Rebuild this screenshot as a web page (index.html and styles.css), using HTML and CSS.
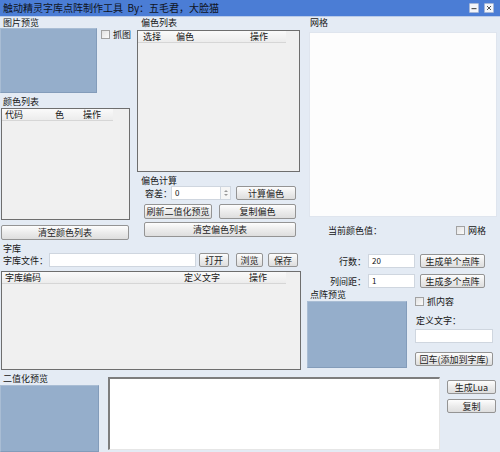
FILE: index.html
```html
<!DOCTYPE html>
<html>
<head>
<meta charset="utf-8">
<link rel="stylesheet" href="styles.css">
</head>
<body>
<div class="titlebar">
  <span class="title">触动精灵字库点阵制作工具&nbsp; By：五毛君，大脸猫</span>
  <div class="tb-btns">
    <span class="tb-btn"><svg width="8" height="8" viewBox="0 0 8 8"><rect x="1.5" y="4" width="5" height="1.2" fill="#555"/></svg></span>
    <span class="tb-btn"><svg width="8" height="8" viewBox="0 0 8 8"><path d="M2 2L6 6M6 2L2 6" stroke="#555" stroke-width="1"/></svg></span>
  </div>
</div>

<div class="top">
  <div class="col-left">
    <div class="lbl lbl-pic">图片预览</div>
    <div class="pic-row">
      <div class="preview pv-pic"></div>
      <div class="chk chk-grab"><span class="box"></span>抓图</div>
    </div>
    <div class="lbl lbl-colors">颜色列表</div>
    <div class="list list-colors">
      <div class="lhead lh-colors"><span>代码</span><span>色</span><span>操作</span></div>
    </div>
    <div class="btn btn-clear-colors">清空颜色列表</div>
  </div>

  <div class="col-mid">
    <div class="lbl lbl-off">偏色列表</div>
    <div class="list list-off">
      <div class="lhead lh-off"><span>选择</span><span>偏色</span><span>操作</span></div>
    </div>
    <div class="lbl lbl-calc">偏色计算</div>
    <div class="calc-row">
      <span class="tol-lbl">容差：</span>
      <span class="input in-tol">0</span>
      <span class="spin"><svg width="8" height="12" viewBox="0 0 8 12"><path d="M2 5L4 3L6 5Z" fill="#999"/><path d="M2 7L4 9L6 7Z" fill="#999"/></svg></span>
      <span class="btn b-calc">计算偏色</span>
    </div>
    <div class="calc-row2">
      <span class="btn b-refresh">刷新二值化预览</span>
      <span class="btn b-copyoff">复制偏色</span>
    </div>
    <div class="btn b-clearoff">清空偏色列表</div>
  </div>

  <div class="col-right">
    <div class="lbl lbl-grid">网格</div>
    <div class="grid-box"></div>
    <div class="grid-row">
      <span class="cur-lbl">当前颜色值：</span>
      <span class="chk chk-grid"><span class="box"></span>网格</span>
    </div>
  </div>
</div>

<div class="mid">
  <div class="lib">
    <div class="lbl lbl-lib">字库</div>
    <div class="lib-row">
      <span class="lib-lbl">字库文件：</span>
      <span class="input in-file"></span>
      <span class="btn b-open">打开</span>
      <span class="btn b-browse">浏览</span>
      <span class="btn b-save">保存</span>
    </div>
    <div class="list list-lib">
      <div class="lhead lh-lib"><span>字库编码</span><span>定义文字</span><span>操作</span></div>
    </div>
  </div>

  <div class="dot">
    <div class="form-row">
      <span class="flbl">行数：</span>
      <span class="input in-num">20</span>
      <span class="btn b-gen">生成单个点阵</span>
    </div>
    <div class="form-row r2">
      <span class="flbl">列间距：</span>
      <span class="input in-num">1</span>
      <span class="btn b-gen">生成多个点阵</span>
    </div>
    <div class="dot-body">
      <div class="dot-prev">
        <div class="lbl lbl-dot">点阵预览</div>
        <div class="preview pv-dot"></div>
      </div>
      <div class="dot-side">
        <div class="chk chk-content"><span class="box"></span>抓内容</div>
        <div class="def-lbl">定义文字：</div>
        <div class="input in-def"></div>
        <div class="btn b-add">回车(添加到字库)</div>
      </div>
    </div>
  </div>
</div>

<div class="bottom">
  <div class="bin">
    <div class="lbl lbl-bin">二值化预览</div>
    <div class="preview pv-bin"></div>
  </div>
  <div class="code"></div>
  <div class="code-btns">
    <div class="btn b-lua">生成Lua</div>
    <div class="btn b-copy">复制</div>
  </div>
</div>
</body>
</html>
```

FILE: styles.css
```css
* { box-sizing: border-box; margin: 0; padding: 0; }
html, body { width: 500px; height: 452px; overflow: hidden; }
body {
  background: #e4ebf4;
  font-family: "Noto Sans CJK SC", "Noto Sans", sans-serif;
  font-size: 9px;
  color: #151515;
  line-height: 1;
}

/* title bar */
.titlebar {
  height: 17px;
  background: #4b7dd5;
  border-bottom: 1px solid #b9cbe9;
  display: flex;
  align-items: center;
  justify-content: space-between;
  padding: 0 6px 0 3px;
}
.title { font-size: 10px; color: #10141c; white-space: nowrap; }
.tb-btns { display: flex; gap: 5px; }
.tb-btn {
  width: 10px; height: 10px;
  background: #f3f5fa;
  border: 1px solid #a7b8d8;
  border-radius: 1px;
  display: flex; align-items: center; justify-content: center;
}

/* shared */
.lbl { white-space: nowrap; }
.preview { background: #95aecb; border: 1px solid #839cba; border-top-color: #a9bdd4; border-left-color: #a9bdd4; }
.list { background: #f0f0f0; border: 1px solid #6e6e6e; overflow: hidden; }
.lhead {
  display: grid;
  height: 12px;
  line-height: 12px;
  background: linear-gradient(#fafafa, #ececec);
  border-bottom: 1px solid #d6d6d6;
}
.btn {
  display: flex; align-items: center; justify-content: center;
  background: linear-gradient(#fdfdfd, #ececec 50%, #dedede);
  border: 1px solid #949494;
  border-radius: 2px;
  color: #1d1d1d;
  white-space: nowrap;
  height: 15px;
}
.input {
  background: #fff;
  border: 1px solid #cfd6df;
  height: 14px;
  line-height: 12px;
  padding-left: 3px;
  font-size: 8px;
}
.chk { display: flex; align-items: center; white-space: nowrap; }
.chk .box {
  width: 9px; height: 9px;
  border: 1px solid #a2a2a2;
  background: linear-gradient(135deg, #e2e2e2, #fbfbfb);
  margin-right: 3px;
}

/* top */
.top { display: flex; height: 228px; }
.col-left { width: 131px; }
.col-mid { width: 163px; margin-left: 6px; }
.col-right { width: 195px; margin-left: 5px; }

.lbl-pic { height: 11px; line-height: 12px; padding-left: 3px; }
.pic-row { display: flex; height: 65px; }
.pv-pic { width: 97px; height: 65px; }
.chk-grab { margin-left: 4px; margin-top: 1px; height: 10px; align-self: flex-start; }
.lbl-colors { margin-top: 2px; height: 13px; line-height: 13px; padding-left: 3px; }
.list-colors { margin-left: 1px; width: 129px; height: 112px; }
.lh-colors { width: 111px; grid-template-columns: 50px 28px 1fr; padding-left: 3px; }
.btn-clear-colors { margin-left: 1px; margin-top: 5px; width: 128px; }

.lbl-off { height: 13px; line-height: 12px; padding-left: 4px; }
.list-off { width: 163px; height: 142px; }
.lh-off { width: 148px; grid-template-columns: 33px 74px 1fr; padding-left: 5px; }
.lbl-calc { margin-top: 3px; height: 11px; line-height: 11px; padding-left: 4px; }
.calc-row { display: flex; align-items: center; height: 14px; }
.tol-lbl { margin-left: 8px; width: 26px; white-space: nowrap; }
.in-tol { width: 50px; }
.spin {
  width: 10px; height: 14px;
  background: #f6f6f6;
  border: 1px solid #cfd6df; border-left: none;
  display: flex; align-items: center; justify-content: center;
}
.b-calc { margin-left: 5px; width: 60px; height: 14px; }
.calc-row2 { display: flex; margin-top: 4px; }
.b-refresh { margin-left: 7px; width: 68px; }
.b-copyoff { margin-left: 7px; width: 77px; }
.b-clearoff { margin-top: 3px; margin-left: 7px; width: 152px; }

.lbl-grid { height: 15px; line-height: 12px; padding-left: 5px; }
.grid-box { margin-left: 4px; width: 188px; height: 185px; background: #fdfdfd; border: 1px solid #dfe5ee; }
.grid-row { display: flex; align-items: center; justify-content: space-between; margin-top: 8px; height: 11px; padding-left: 23px; padding-right: 14px; }

/* middle */
.mid { display: flex; height: 127px; }
.lib { width: 302px; }
.lbl-lib { height: 8px; line-height: 8px; padding-left: 3px; }
.lib-row { display: flex; height: 14px; align-items: center; }
.lib-lbl { width: 49px; padding-left: 3px; white-space: nowrap; }
.in-file { width: 147px; }
.b-open { margin-left: 3px; width: 30px; height: 14px; }
.b-browse { margin-left: 7px; width: 27px; height: 14px; }
.b-save { margin-left: 5px; width: 30px; height: 14px; }
.list-lib { margin-top: 4px; margin-left: 1px; width: 300px; height: 99px; }
.lh-lib { width: 284px; grid-template-columns: 179px 65px 1fr; padding-left: 3px; }

.dot { width: 195px; margin-left: 3px; padding-top: 9px; }
.form-row { display: flex; align-items: center; height: 14px; }
.form-row.r2 { margin-top: 6px; }
.flbl { width: 63px; text-align: right; padding-right: 2px; white-space: nowrap; }
.in-num { width: 47px; }
.b-gen { margin-left: 5px; width: 65px; height: 14px; }
.dot-body { display: flex; }
.lbl-dot { height: 13px; line-height: 13px; padding-left: 5px; }
.pv-dot { margin-left: 2px; width: 100px; height: 67px; }
.dot-side { margin-left: 8px; width: 78px; }
.chk-content { margin-top: 9px; height: 9px; }
.def-lbl { margin-top: 8px; height: 13px; line-height: 13px; padding-left: 1px; }
.in-def { margin-top: 2px; width: 78px; }
.b-add { margin-top: 9px; width: 78px; height: 14px; }

/* bottom */
.bottom { display: flex; height: 80px; }
.bin { width: 100px; }
.lbl-bin { height: 13px; line-height: 13px; padding-left: 3px; }
.pv-bin { width: 99px; height: 67px; }
.code {
  margin-left: 8px; margin-top: 5px;
  width: 332px; height: 73px;
  background: #fff;
  border-top: 2px solid #7d7d7d;
  border-left: 2px solid #7d7d7d;
  border-right: 1px solid #e6e6e6;
  border-bottom: 1px solid #e6e6e6;
}
.code-btns { margin-left: 7px; padding-top: 8px; }
.b-lua { width: 49px; height: 14px; }
.b-copy { margin-top: 5px; width: 49px; height: 14px; }
```
